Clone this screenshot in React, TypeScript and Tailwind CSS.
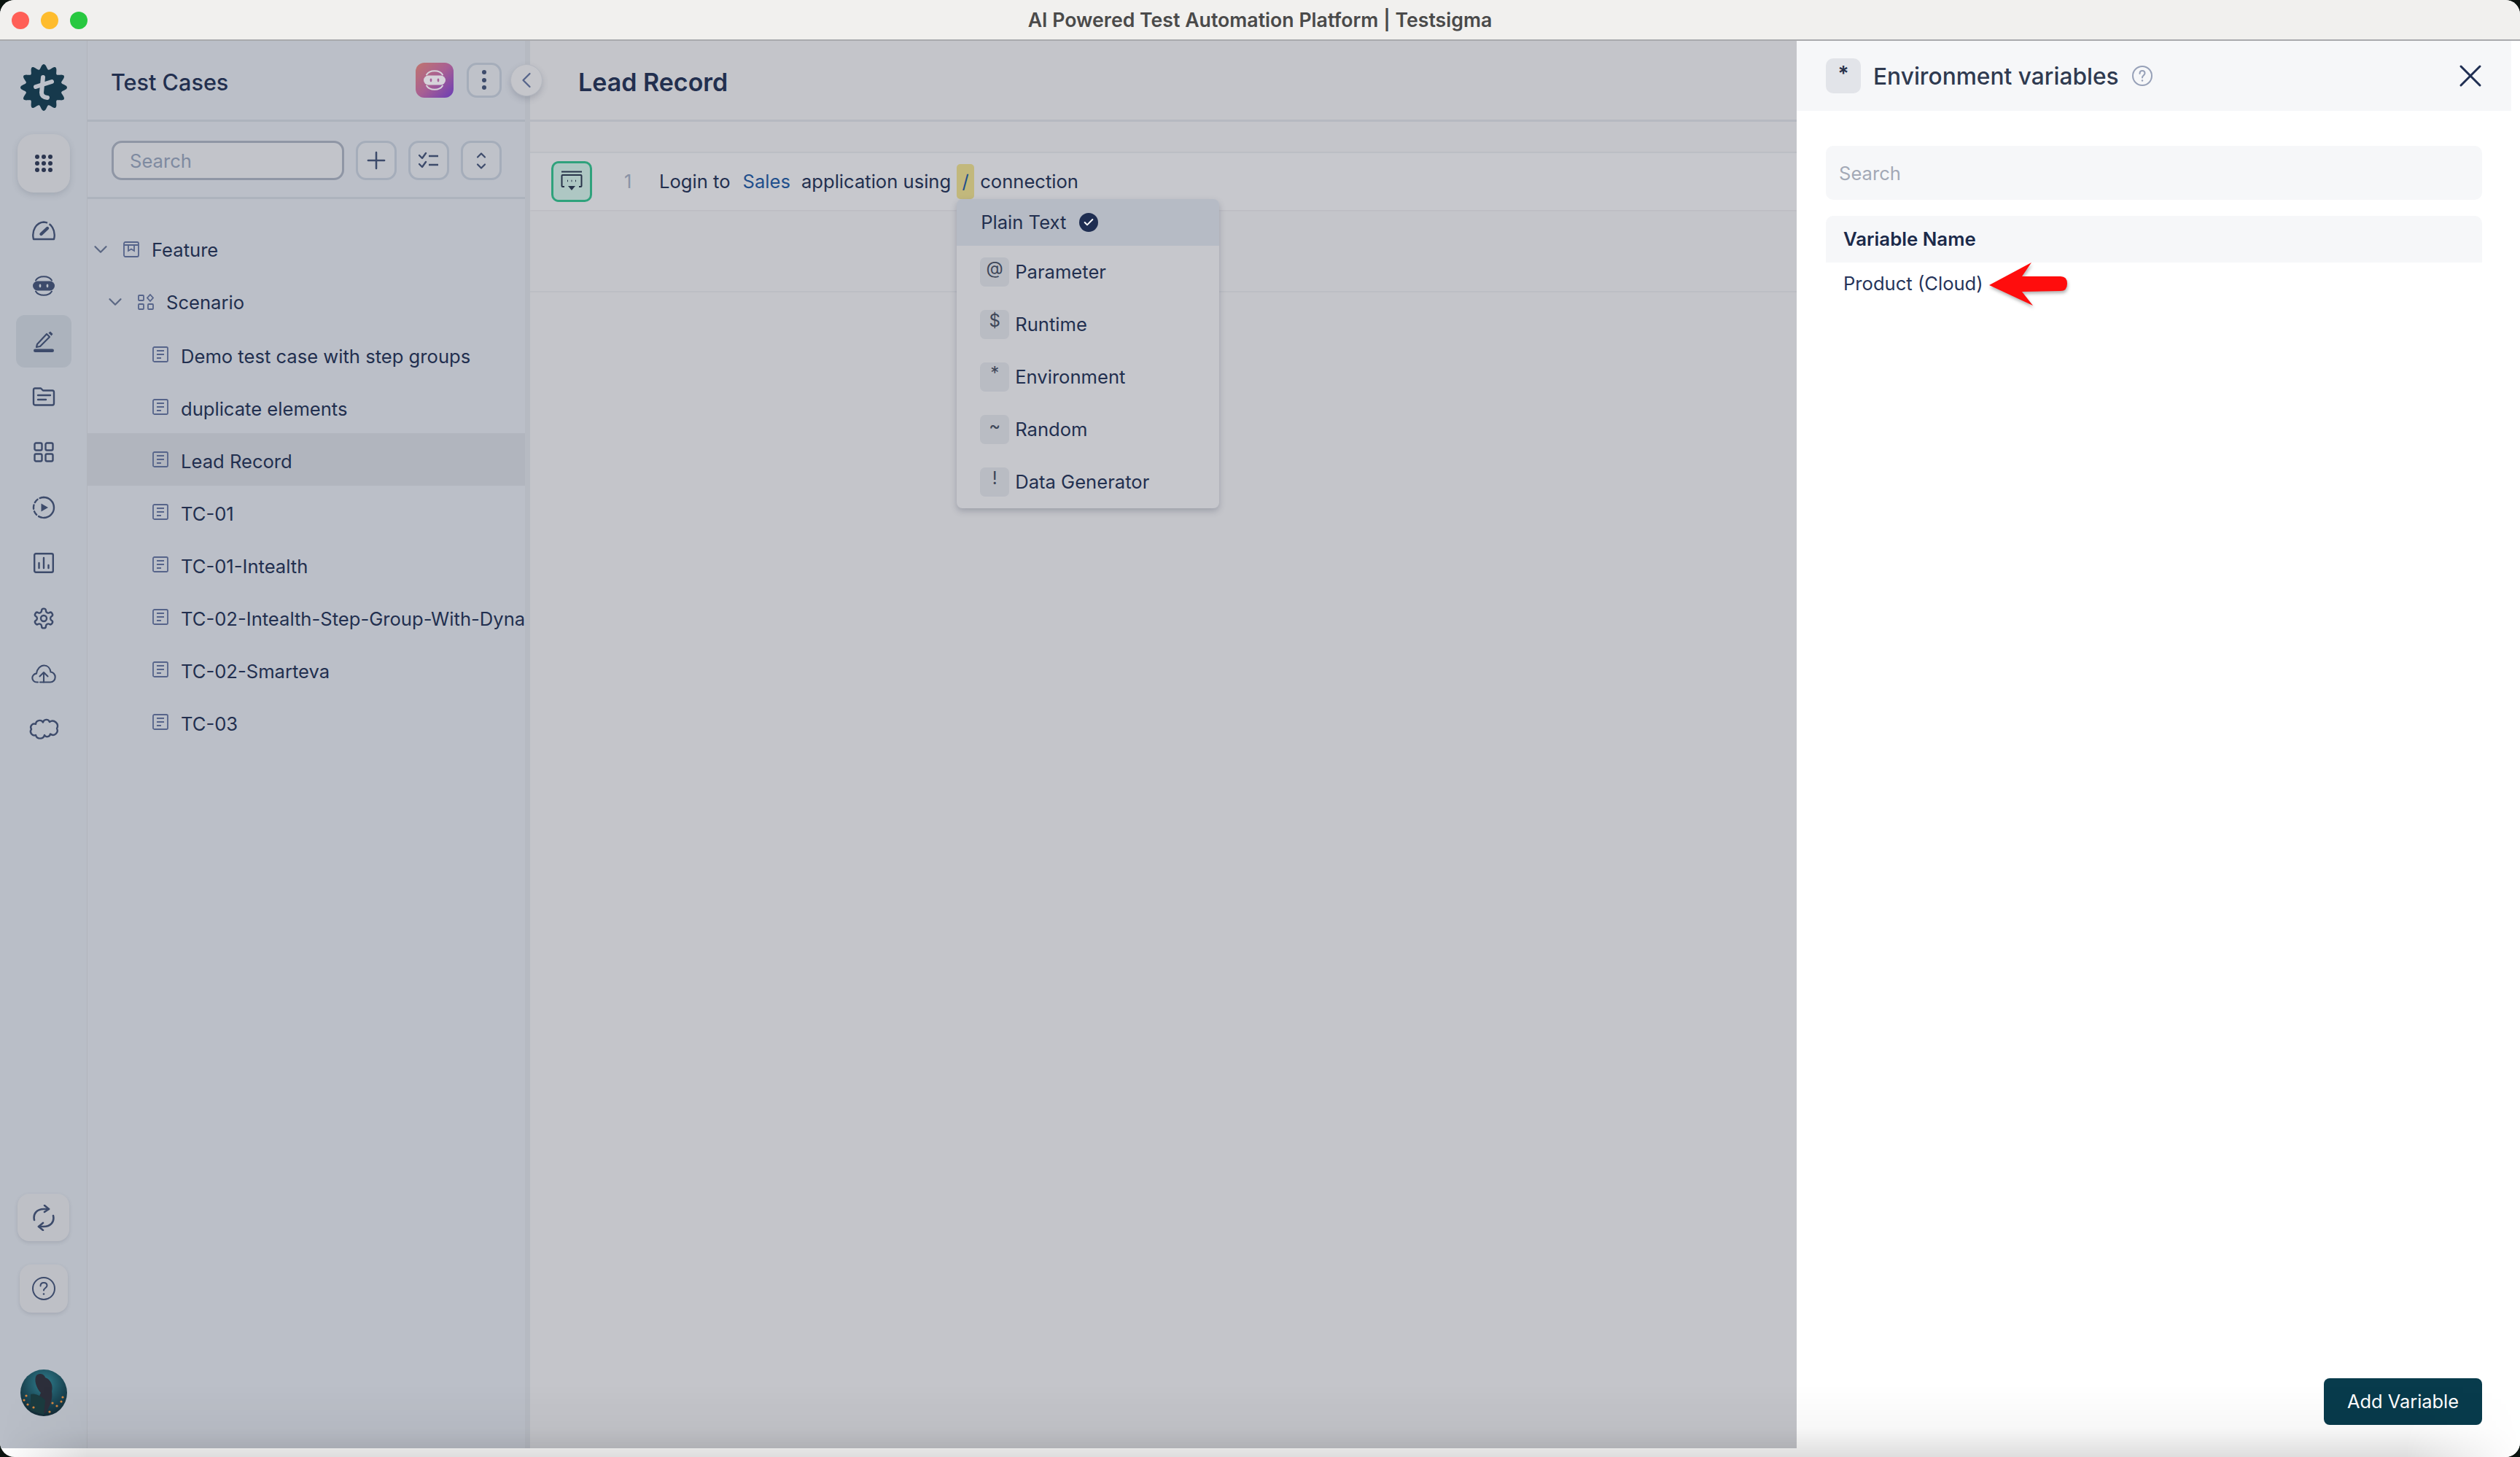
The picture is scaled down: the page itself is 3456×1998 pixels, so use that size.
import React from "react";
import { Plus, ChevronLeft, ChevronDown, ChevronUp, X, Check } from "lucide-react";

const ICON = "#3d4b6b";

function Logo() {
  const pts: string[] = [];
  for (let i = 0; i < 240; i++) {
    const t = (i / 240) * Math.PI * 2;
    const r = 28.5 + 3.5 * Math.cos(12 * t);
    pts.push(`${(32 + r * Math.sin(t)).toFixed(2)},${(32 - r * Math.cos(t)).toFixed(2)}`);
  }
  return (
    <svg width="64" height="64" viewBox="0 0 64 64">
      <polygon points={pts.join(" ")} fill="#16394c" />
      <path d="M31 18 L29 39 Q29 45 37 46" fill="none" stroke="#bcc0c9" strokeWidth="6" strokeLinecap="round" />
      <path d="M21 31 L43 24" fill="none" stroke="#bcc0c9" strokeWidth="6" strokeLinecap="round" />
    </svg>
  );
}

function Ninja({ size = 32, color = ICON, eye = "#b9bec7" }: { size?: number; color?: string; eye?: string }) {
  return (
    <svg width={size} height={size} viewBox="0 0 32 32" fill="none">
      <path d="M5 8.5 C9 1.5 23 1.5 27 8.5" stroke={color} strokeWidth="2" strokeLinecap="round" />
      <path d="M5 23.5 C9 30.5 23 30.5 27 23.5" stroke={color} strokeWidth="2" strokeLinecap="round" />
      <rect x="1" y="9.5" width="30" height="13" rx="6.5" fill={color} />
      <ellipse cx="11" cy="16" rx="1.4" ry="2.4" fill={eye} />
      <ellipse cx="21" cy="16" rx="1.4" ry="2.4" fill={eye} />
    </svg>
  );
}

const s = { fill: "none", stroke: ICON, strokeWidth: 2.4, strokeLinecap: "round", strokeLinejoin: "round" } as const;

const railIcons: React.ReactNode[] = [
  <svg key="g" width="34" height="28" viewBox="0 0 34 28">
    <path d="M3 26 C0 14 7 3 17 2.5 C27 3 34 14 31 26 Z" {...s} />
    <path d="M13.5 19 L22 11" stroke={ICON} strokeWidth="4.4" strokeLinecap="round" />
    <path d="M24 3 L22 7" stroke="#b9bec7" strokeWidth="3" />
  </svg>,
  <Ninja key="n" />,
  <svg key="p" width="30" height="30" viewBox="0 0 30 30">
    <path d="M6 19 L19 5 L23 9 L10 22 L5 23 Z" {...s} strokeWidth={2.2} />
    <path d="M21.5 3.5 L24 1.5 L27.5 5 L25.5 7.5 Z" fill={ICON} />
    <rect x="1" y="25.5" width="28" height="4.5" rx="2.2" fill={ICON} />
  </svg>,
  <svg key="f" width="32" height="26" viewBox="0 0 32 26">
    <path d="M2 4 Q2 1.5 4 1.5 H12 L15 4.5 H28 Q30 4.5 30 7 V22 Q30 24.5 28 24.5 H4 Q2 24.5 2 22 Z" {...s} />
    <path d="M8 11 H25 M8 17 H19" {...s} />
  </svg>,
  <svg key="a" width="28" height="28" viewBox="0 0 28 28">
    <rect x="1.5" y="1.5" width="10" height="10" rx="2" {...s} />
    <rect x="16.5" y="1.5" width="10" height="10" rx="2" {...s} />
    <rect x="1.5" y="16.5" width="10" height="10" rx="2" {...s} />
    <rect x="16.5" y="16.5" width="10" height="10" rx="2" {...s} />
  </svg>,
  <svg key="r" width="32" height="32" viewBox="0 0 32 32">
    <path d="M16 2 A14 14 0 0 1 16 30" {...s} />
    <path d="M16 2 A14 14 0 0 0 16 30" {...s} strokeDasharray="5.5 3.6" />
    <path d="M12.5 10.5 L22 16 L12.5 21.5 Z" fill={ICON} />
  </svg>,
  <svg key="c" width="28" height="28" viewBox="0 0 28 28">
    <rect x="1.2" y="1.2" width="25.6" height="25.6" rx="2" {...s} />
    <path d="M7.5 21 V14 M14 21 V7 M20.5 21 V17" {...s} />
  </svg>,
  <svg key="s" width="32" height="32" viewBox="0 0 24 24">
    <path
      d="M12.22 2h-.44a2 2 0 0 0-2 2v.18a2 2 0 0 1-1 1.73l-.43.25a2 2 0 0 1-2 0l-.15-.08a2 2 0 0 0-2.73.73l-.22.38a2 2 0 0 0 .73 2.73l.15.1a2 2 0 0 1 1 1.72v.51a2 2 0 0 1-1 1.74l-.15.09a2 2 0 0 0-.73 2.73l.22.38a2 2 0 0 0 2.73.73l.15-.08a2 2 0 0 1 2 0l.43.25a2 2 0 0 1 1 1.73V20a2 2 0 0 0 2 2h.44a2 2 0 0 0 2-2v-.18a2 2 0 0 1 1-1.73l.43-.25a2 2 0 0 1 2 0l.15.08a2 2 0 0 0 2.73-.73l.22-.39a2 2 0 0 0-.73-2.73l-.15-.08a2 2 0 0 1-1-1.74v-.5a2 2 0 0 1 1-1.74l.15-.09a2 2 0 0 0 .73-2.73l-.22-.38a2 2 0 0 0-2.73-.73l-.15.08a2 2 0 0 1-2 0l-.43-.25a2 2 0 0 1-1-1.73V4a2 2 0 0 0-2-2z"
      {...s}
      strokeWidth={1.8}
    />
    <circle cx="12" cy="12" r="3" {...s} strokeWidth={1.8} />
  </svg>,
  <svg key="u" width="34" height="26" viewBox="0 0 34 26">
    <path d="M9 24.5 H7.5 C3.5 24.5 1.3 21.5 1.3 18.5 C1.3 15.2 4 12.8 7 12.6 C8 6 12.5 1.5 17.5 1.5 C22.5 1.5 25.8 5.5 26.5 10.5 C30 10.8 32.7 14 32.7 17.5 C32.7 21.5 29.8 24.5 26 24.5 H12" {...s} strokeWidth={2.1} />
    <path d="M17 24.5 V11.5 M11.5 16.5 L17 11 L22.5 16.5" {...s} strokeWidth={2.1} />
  </svg>,
  <svg key="b" width="40" height="30" viewBox="0 -1 40 30" className="overflow-visible">
    <path d="M9 7 A5.4 5.4 0 0 1 19 4.5 A4.7 4.7 0 0 1 28 4 A6.9 6.9 0 0 1 38 13 A6 6 0 0 1 29 20.5 A4.3 4.3 0 0 1 21 22 A6.2 6.2 0 0 1 9 22 A5.2 5.2 0 0 1 3 14 A4.8 4.8 0 0 1 9 7 Z" {...s} />
  </svg>,
];

function DocIcon() {
  return (
    <svg width="22" height="22" viewBox="0 0 22 22" className="shrink-0">
      <rect x="1" y="1" width="20" height="20" rx="1.8" fill="none" stroke="#56648a" strokeWidth="1.8" />
      <path d="M6 6 H16 M6 11 H16 M6 16 H12" stroke="#56648a" strokeWidth="1.8" />
    </svg>
  );
}

const cases = [
  "Demo test case with step groups",
  "duplicate elements",
  "Lead Record",
  "TC-01",
  "TC-01-Intealth",
  "TC-02-Intealth-Step-Group-With-Dynamic-Data",
  "TC-02-Smarteva",
  "TC-03",
];

const menu: [string, string][] = [
  ["@", "Parameter"],
  ["$", "Runtime"],
  ["*", "Environment"],
  ["~", "Random"],
  ["!", "Data Generator"],
];

function Rail() {
  return (
    <aside className="w-[120px] shrink-0 border-r border-[#b1b5bd] bg-[#b9bec7] flex flex-col items-center">
      <div className="mt-[32px]">
        <Logo />
      </div>
      <button className="mt-[32px] w-[72px] h-[80px] rounded-[22px] bg-[#bfc1c7] shadow-[0_3px_8px_rgba(60,70,90,0.18)] flex items-center justify-center">
        <svg width="26" height="26" viewBox="0 0 26 26" fill="#2c3650">
          {[4, 13, 22].map((y) =>
            [4, 13, 22].map((x) => <circle key={`${x}-${y}`} cx={x} cy={y} r="3" />),
          )}
        </svg>
      </button>
      <div className="mt-[14px] flex flex-col items-center">
        {railIcons.map((ic, i) => (
          <div
            key={i}
            className={
              i === 2
                ? "w-[76px] h-[72px] my-[2px] rounded-[12px] bg-[#acb3bd] flex items-center justify-center"
                : "w-[76px] h-[76px] flex items-center justify-center"
            }
          >
            {ic}
          </div>
        ))}
      </div>
      <button className="mt-auto w-[71px] h-[65px] rounded-[16px] bg-[#bec0c6] shadow-[0_2px_5px_rgba(60,70,90,0.16)] flex items-center justify-center">
        <svg width="30" height="36" viewBox="0 0 30 36" fill="none" stroke={ICON} strokeWidth="2.6" strokeLinecap="round" strokeLinejoin="round">
          <path d="M2 21 C0 12 6 6 15 6 L22 6" />
          <path d="M16 1 L22 6 L16 10" />
          <path d="M28 15 C30 24 24 30 15 30 L8 30" />
          <path d="M14 25 L8 30 L14 35" />
        </svg>
      </button>
      <button className="mt-[32px] w-[66px] h-[66px] rounded-[16px] bg-[#bec0c6] shadow-[0_2px_5px_rgba(60,70,90,0.16)] flex items-center justify-center">
        <svg width="32" height="32" viewBox="0 0 32 32" fill="none" stroke={ICON} strokeWidth="2" strokeLinecap="round">
          <circle cx="16" cy="16" r="15" />
          <path d="M11.5 12.5 C11.5 9.5 13.5 8 16 8 C18.5 8 20.5 9.5 20.5 12 C20.5 15 16 15.5 16 18.5" />
          <circle cx="16" cy="23.5" r="1.3" fill={ICON} stroke="none" />
        </svg>
      </button>
      <div className="mt-[78px] mb-[44px]">
        <svg width="64" height="64" viewBox="0 0 64 64">
          <defs>
            <radialGradient id="av" cx="50%" cy="30%" r="70%">
              <stop offset="0%" stopColor="#2f7f8f" />
              <stop offset="60%" stopColor="#1c4a58" />
              <stop offset="100%" stopColor="#142a35" />
            </radialGradient>
          </defs>
          <circle cx="32" cy="32" r="32" fill="url(#av)" />
          <path d="M22 8 C27 4 33 7 34 11 C42 14 45 22 43 30 C45 40 40 52 34 60 L24 60 C22 50 24 40 28 32 C22 26 18 14 22 8 Z" fill="#2c2e3a" />
          <path d="M14 34 C20 32 28 36 34 42 L32 62 L14 56 Z" fill="#1b3b3f" />
          {[[5, 42], [10, 48], [8, 36], [56, 44], [50, 50], [44, 46], [40, 58], [18, 52], [58, 38]].map(([x, y], i) => (
            <circle key={i} cx={x} cy={y} r="1.6" fill="#d5853f" />
          ))}
        </svg>
      </div>
    </aside>
  );
}

function OutlineButton({ children, className }: { children: React.ReactNode; className: string }) {
  return (
    <button className={`${className} shrink-0 rounded-[14px] border-[3px] border-[#a5adba] bg-[#bfc2c9] flex items-center justify-center`}>
      {children}
    </button>
  );
}

function TestCasesPanel() {
  return (
    <section className="w-[607px] shrink-0 border-r-[7px] border-[#b6bac2] bg-[#bbbfc8] flex flex-col relative">
      <header className="h-[111px] shrink-0 border-b-[3px] border-[#adb3bd] pl-[32px] pr-[32px] flex items-center">
        <h2 className="pt-[5px] text-[30.6px] font-medium text-[#222f4f]">Test Cases</h2>
        <div className="ml-auto flex items-center gap-[18px]">
          <div className="w-[52px] h-[48px] rounded-[12px] bg-[linear-gradient(135deg,#c0756e,#a85f93_50%,#6a3db6)] flex items-center justify-center">
            <Ninja size={32} color="#d6d3da" eye="#a8619a" />
          </div>
          <OutlineButton className="w-[48px] h-[48px]">
            <svg width="8" height="32" viewBox="0 0 8 32" fill={ICON}>
              <circle cx="4" cy="5" r="3" />
              <circle cx="4" cy="16" r="3" />
              <circle cx="4" cy="26" r="3" />
            </svg>
          </OutlineButton>
        </div>
      </header>
      <div className="h-[106px] shrink-0 border-b-[3px] border-[#adb3bd] pt-[3px] pl-[33px] pr-[32px] flex items-center gap-[16px]">
        <input
          placeholder="Search"
          className="w-[319px] h-[54px] rounded-[14px] border-[3px] border-[#8f96a5] bg-[#c2c4ca] px-[22px] text-[25.6px] text-[#222f4f] placeholder:text-[#7e8aa0] outline-none"
        />
        <OutlineButton className="w-[56px] h-[54px]">
          <Plus size={38} color={ICON} strokeWidth={1.6} />
        </OutlineButton>
        <OutlineButton className="w-[56px] h-[54px]">
          <svg width="28" height="24" viewBox="0 0 28 24" fill="none" stroke={ICON} strokeWidth="2.4">
            <path d="M1 5 L5 9 L10 2 M1 17 L5 21 L10 14" strokeLinecap="round" strokeLinejoin="round" />
            <path d="M14 6 H27 M14 18 H27" />
          </svg>
        </OutlineButton>
        <OutlineButton className="w-[56px] h-[54px]">
          <div className="flex flex-col items-center">
            <ChevronUp size={20} color={ICON} strokeWidth={2.6} />
            <ChevronDown size={20} color={ICON} strokeWidth={2.6} className="-mt-[5px]" />
          </div>
        </OutlineButton>
      </div>
      <div className="pt-[33px] flex flex-col text-[25.6px] text-[#222f4f] overflow-hidden">
        <div className="h-[72px] pl-[3px] flex items-center">
          <ChevronDown size={30} color="#5c6884" strokeWidth={1.8} className="shrink-0" />
          <svg width="22" height="22" viewBox="0 0 22 22" fill="none" stroke="#56648a" strokeWidth="1.8" className="ml-[16px]">
            <rect x="1" y="1" width="20" height="20" rx="2" />
            <path d="M1 5 H21 M7 5 V13 L11 10.5 L15 13 V5" />
          </svg>
          <span className="ml-[17px] pt-[3px]">Feature</span>
        </div>
        <div className="h-[72px] pl-[23px] flex items-center">
          <ChevronDown size={30} color="#5c6884" strokeWidth={1.8} className="shrink-0" />
          <svg width="22" height="22" viewBox="0 0 22 22" fill="none" stroke="#56648a" strokeWidth="1.8" className="ml-[16px]">
            <rect x="1" y="2" width="7" height="7" rx="1" />
            <path d="M17 1 L21 5.5 L17 10 L13 5.5 Z" />
            <rect x="1" y="14" width="7" height="7" rx="1" />
            <rect x="14" y="14" width="7" height="7" rx="1" />
          </svg>
          <span className="ml-[17px] pt-[3px]">Scenario</span>
        </div>
        {cases.map((c, i) => (
          <div key={c} className={`h-[72px] pl-[89px] flex items-center gap-[17px] ${i === 2 ? "bg-[#b1b5be]" : ""}`}>
            <DocIcon />
            <span className="pt-[6px] whitespace-nowrap">{c}</span>
          </div>
        ))}
      </div>
      <button className="absolute left-[580px] top-[32px] w-[44px] h-[44px] rounded-full border border-[#b5b9c1] bg-[#c5c6cb] shadow-[0_4px_8px_rgba(60,70,90,0.22)] flex items-center justify-center z-10">
        <ChevronLeft size={36} color="#56648a" strokeWidth={1.5} />
      </button>
    </section>
  );
}

function MainArea() {
  return (
    <main className="flex-1 min-w-0 bg-[#c4c5ca] flex flex-col">
      <header className="h-[111px] shrink-0 border-b-[3px] border-[#b6b9c1] pl-[66px] flex items-center">
        <h1 className="pt-[5px] text-[34px] font-semibold text-[#222f4f]">Lead Record</h1>
      </header>
      <div className="mt-[41px] h-[80px] shrink-0 bg-[#c7c8cd] border-t-2 border-[#bcbec4] shadow-[0_1px_2px_rgba(60,70,90,0.08)] pl-[29px] flex items-center text-[25.6px] text-[#222f4f]">
        <div className="w-[56px] h-[56px] rounded-[10px] border-[3px] border-[#2fa27c] bg-[#aec7c3] flex items-center justify-center">
          <svg width="30" height="30" viewBox="0 0 30 30" fill="none" stroke="#28344a" strokeWidth="2">
            <path d="M1 1.5 H29" />
            <path d="M5 22 H2.5 Q1.5 22 1.5 21 V7 Q1.5 6 2.5 6 H27.5 Q28.5 6 28.5 7 V21 Q28.5 22 27.5 22 H25" />
            <path d="M9 14 H10 M14.5 14 H15.5 M20 14 H21" strokeWidth="2.4" />
            <path d="M10 21 H20 L15 27 Z" fill="#28344a" stroke="none" />
          </svg>
        </div>
        <span className="ml-[44px] text-[#8a93a6] w-[48px]">1</span>
        <span>Login to</span>
        <span className="ml-[17px] text-[#1f4f8c]">Sales</span>
        <span className="ml-[15px]">application using</span>
        <span className="relative ml-[8px] w-[24px] h-[48px] rounded-[5px] bg-[#c2b87c] text-[#1f4f8c] flex items-center justify-center">
          /
          <div className="absolute left-0 top-[48px] w-[360px] h-[424px] rounded-[8px] bg-[#c6c7cc] shadow-[0_4px_8px_rgba(60,70,90,0.28)] z-20 overflow-hidden">
            <div className="h-[64px] pl-[33px] bg-[#b6bbc5] flex items-center gap-[18px]">
              <span className="text-[#222f4f]">Plain Text</span>
              <span className="w-[26px] h-[26px] rounded-full bg-[#1f2e52] flex items-center justify-center">
                <Check size={16} color="#ffffff" strokeWidth={3} />
              </span>
            </div>
            <div className="pt-[16px] flex flex-col gap-[32px] pl-[32px]">
              {menu.map(([sym, label]) => (
                <div key={label} className="h-[40px] flex items-center gap-[8px]">
                  <span className="w-[40px] h-[40px] rounded-[7px] bg-[#b9bcc3] text-[#3d4658] text-[24px] leading-[30px] flex justify-center">
                    {sym}
                  </span>
                  <span className="text-[#222f4f]">{label}</span>
                </div>
              ))}
            </div>
          </div>
        </span>
        <span className="ml-[8px]">connection</span>
      </div>
      <div className="h-[113px] shrink-0 border-b-2 border-[#bcbec4]" />
    </main>
  );
}

function Drawer() {
  return (
    <aside className="w-[992px] h-[1942px] shrink-0 bg-white pr-[12px] flex flex-col">
      <header className="h-[96px] shrink-0 bg-[#f6f7f9] pl-[40px] pr-[30px] flex items-center">
        <span className="w-[48px] h-[48px] rounded-[10px] bg-[#e2e4e9] text-[#27324a] text-[28px] font-semibold leading-[42px] flex justify-center">*</span>
        <h2 className="ml-[17px] pt-[1px] text-[31.7px] font-medium text-[#2f3a50]">Environment variables</h2>
        <svg width="28" height="28" viewBox="0 0 28 28" fill="none" stroke="#97a1b8" strokeWidth="2" strokeLinecap="round" className="ml-[18px]">
          <circle cx="14" cy="14" r="13" />
          <path d="M10.5 11 C10.5 8.5 12 7 14 7 C16 7 17.5 8.5 17.5 10.5 C17.5 13 14 13.5 14 16.5" />
          <circle cx="14" cy="20.5" r="1.2" fill="#97a1b8" stroke="none" />
        </svg>
        <X size={52} color="#1f2e52" strokeWidth={1.4} className="ml-auto" />
      </header>
      <div className="mt-[48px] mx-[40px] flex flex-col relative">
        <input
          placeholder="Search"
          className="h-[74px] rounded-[10px] bg-[#f6f7f9] px-[18px] pt-[1px] text-[25.6px] placeholder:text-[#a3a9b6] outline-none"
        />
        <div className="mt-[22px] h-[64px] rounded-t-[10px] bg-[#f6f7f9] pl-[24px] pt-[1px] flex items-center text-[25.8px] font-semibold text-[#1b2a4a]">
          Variable Name
        </div>
        <div className="h-[58px] pl-[24px] flex items-center text-[25.6px] text-[#26345a]">Product (Cloud)</div>
        <svg width="108" height="60" viewBox="0 0 108 60" className="absolute left-[224px] top-[160px] drop-shadow-[1px_3px_2px_rgba(0,0,0,0.3)]">
          <path d="M0 31 L58 0 L45 19 H98 Q107 19 107 29 Q107 39 98 39 L45 40 L60 59 Z" fill="#ff0d0d" />
        </svg>
      </div>
      <button className="mt-auto ml-auto mr-[40px] mb-[44px] w-[217px] h-[64px] rounded-[8px] bg-[#083b4c] pt-[1px] text-white text-[25.4px]">Add Variable</button>
    </aside>
  );
}

export default function App() {
  return (
    <div className="w-[3456px] h-[1998px] bg-[#0c1410] overflow-hidden font-['Inter',sans-serif]">
      <div className="relative w-full h-full rounded-[20px] overflow-hidden bg-white flex flex-col">
        <div className="relative h-[56px] shrink-0 bg-[#f1f0ee] border-b-2 border-[#a9aaad] flex items-center justify-center">
          <div className="absolute left-[16px] top-[16px] flex gap-[16px]">
            <span className="w-[24px] h-[24px] rounded-full bg-[#ff5f57]" />
            <span className="w-[24px] h-[24px] rounded-full bg-[#febc2e]" />
            <span className="w-[24px] h-[24px] rounded-full bg-[#28c840]" />
          </div>
          <span className="text-[26.7px] font-semibold text-[#4a4a4a]">AI Powered Test Automation Platform | Testsigma</span>
        </div>
        <div className="flex items-start">
          <div className="flex w-[2464px] h-[1930px] shrink-0">
            <Rail />
            <TestCasesPanel />
            <MainArea />
          </div>
          <Drawer />
        </div>
        <div className="absolute left-0 right-0 bottom-0 h-[100px] pointer-events-none bg-linear-to-b from-transparent via-black/3 via-60% to-black/13 [mask-image:linear-gradient(90deg,transparent,black_120px,black_3300px,transparent)]" />
      </div>
    </div>
  );
}
